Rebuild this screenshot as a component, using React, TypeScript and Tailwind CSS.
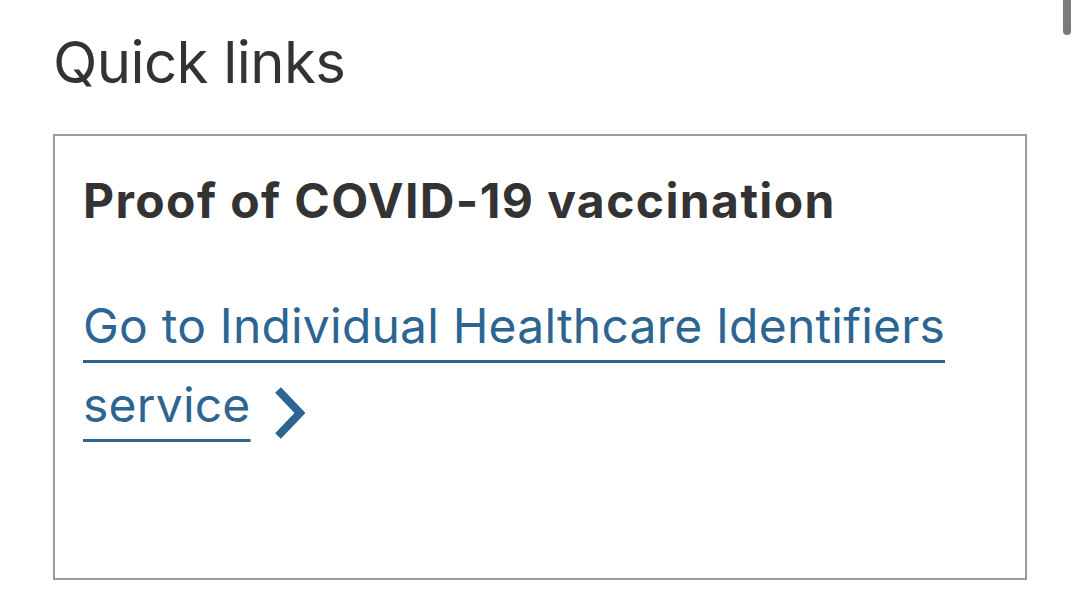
const Chevron = () => (
  <svg
    width="32"
    height="54"
    viewBox="0 0 32 54"
    className="inline-block ml-[22px] align-[-18px]"
    aria-hidden="true"
  >
    <polyline points="5,4 27,27 5,50" fill="none" stroke="#2c6592" strokeWidth="8" strokeLinejoin="miter" />
  </svg>
);

const App = () => {
  return (
    <div className="relative w-[1080px] h-[606px] bg-white overflow-hidden font-['Inter',sans-serif]">
      {/* scrollbar thumb */}
      <div className="absolute right-[9px] top-0 w-[8px] h-[35px] rounded-b-full bg-[#7a7a7a]" />

      <div className="pl-[53px] pt-[27px] w-[1027px]">
        <h2 className="text-[58px] leading-[70px] text-[#333333] font-normal tracking-[-0.6px]">Quick links</h2>

        <div className="mt-[37px] h-[446px] border-2 border-[#9b9b9b] px-[28px] pt-[36px]">
          <h3 className="text-[48px] leading-[58px] font-bold text-[#333333] tracking-[1.4px]">
            Proof of COVID-19 vaccination
          </h3>

          <p className="mt-[56px] text-[48px] leading-[79px] text-[#2c6592] tracking-[0.2px]">
            <a href="#" className="underline decoration-[3px] underline-offset-[17px] decoration-[#2c6592]">
              Go to Individual Healthcare Identifiers service
            </a>
            <Chevron />
          </p>
        </div>
      </div>
    </div>
  );
};

export default App;
